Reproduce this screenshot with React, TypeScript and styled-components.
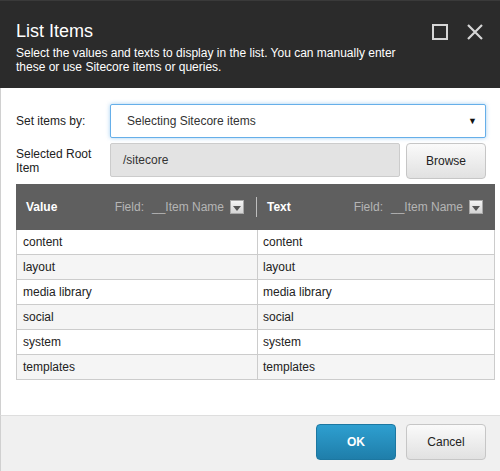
import React from "react";
import styled, { createGlobalStyle } from "styled-components";

const ITEMS = ["content", "layout", "media library", "social", "system", "templates"];

const GlobalStyle = createGlobalStyle`
  html, body {
    margin: 0;
    padding: 0;
    background: #ffffff;
  }
  body {
    font-family: "Liberation Sans", Arial, sans-serif;
    font-size: 12px;
    color: #222222;
  }
`;

const App: React.FC = () => {
  return (
    <>
      <GlobalStyle />
      <Dialog>
        <Header>
          <HeaderText>
            <Title>List Items</Title>
            <Description>
              Select the values and texts to display in the list. You can manually enter these or use Sitecore
              items or queries.
            </Description>
          </HeaderText>
          <HeaderIcons>
            <IconButton aria-label="Maximize">
              <svg width="16" height="16" viewBox="0 0 16 16">
                <rect x="1" y="1" width="14" height="14" fill="none" stroke="#d6d6d6" strokeWidth="2" />
              </svg>
            </IconButton>
            <IconButton aria-label="Close">
              <svg width="16" height="16" viewBox="0 0 16 16">
                <path d="M1 1 L15 15 M15 1 L1 15" stroke="#d6d6d6" strokeWidth="2.2" fill="none" />
              </svg>
            </IconButton>
          </HeaderIcons>
        </Header>

        <Body>
          <FormRow>
            <Label>Set items by:</Label>
            <Select>
              <span>Selecting Sitecore items</span>
              <SelectArrow>▼</SelectArrow>
            </Select>
          </FormRow>
          <FormRow>
            <Label>Selected Root Item</Label>
            <InputGroup>
              <TextInput>/sitecore</TextInput>
              <Button>Browse</Button>
            </InputGroup>
          </FormRow>

          <Table>
            <HeaderRow>
              <HeaderCell>
                <HeaderLabel>Value</HeaderLabel>
                <FieldPicker />
              </HeaderCell>
              <HeaderCell $divided>
                <HeaderLabel>Text</HeaderLabel>
                <FieldPicker />
              </HeaderCell>
            </HeaderRow>
            {ITEMS.map((item, index) => (
              <Row key={item} $striped={index % 2 === 1}>
                <Cell>{item}</Cell>
                <Cell>{item}</Cell>
              </Row>
            ))}
          </Table>
        </Body>

        <Footer>
          <Button $primary>OK</Button>
          <Button>Cancel</Button>
        </Footer>
      </Dialog>
    </>
  );
};
export default App;

const FieldPicker: React.FC = () => (
  <Field>
    <span>Field:</span>
    <FieldName>__Item Name</FieldName>
    <DropIcon>
      <svg width="8" height="5" viewBox="0 0 8 5">
        <path d="M0 0 L8 0 L4 5 Z" fill="#555" />
      </svg>
    </DropIcon>
  </Field>
);

const Dialog = styled.div`
  width: 500px;
  height: 471px;
  display: flex;
  flex-direction: column;
  overflow: hidden;
`;

const Header = styled.div`
  display: flex;
  justify-content: space-between;
  align-items: flex-start;
  padding: 19px 17px 14px 16px;
  background: #2b2b2b;
  border-top: 1px solid #3a3a3a;
  color: #ffffff;
`;

const HeaderText = styled.div`
  display: flex;
  flex-direction: column;
  gap: 4px;
`;

const Title = styled.div`
  font-size: 18px;
  line-height: 22px;
`;

const Description = styled.div`
  width: 400px;
  font-size: 12px;
  line-height: 14px;
`;

const HeaderIcons = styled.div`
  display: flex;
  gap: 19px;
  margin-top: 4px;
`;

const IconButton = styled.div`
  width: 16px;
  height: 16px;
  display: flex;
`;

const Body = styled.div`
  flex: 1;
  display: flex;
  flex-direction: column;
  gap: 5px;
  padding: 16px 5px 0 15px;
  border-left: 1px solid #d0d0d0;
`;

const FormRow = styled.div`
  display: grid;
  grid-template-columns: 94px 1fr;
  align-items: center;
  margin-right: 9px;
`;

const Label = styled.div`
  line-height: 14px;
  padding-right: 8px;
`;

const Select = styled.div`
  height: 34px;
  box-sizing: border-box;
  display: flex;
  align-items: center;
  justify-content: space-between;
  padding: 0 8px 0 16px;
  border: 1px solid #66afe9;
  border-radius: 2px;
  box-shadow: 0 0 4px rgba(102, 175, 233, 0.6);
  background: #ffffff;
  color: #333333;
`;

const SelectArrow = styled.span`
  font-size: 9px;
  color: #111111;
`;

const InputGroup = styled.div`
  display: flex;
  gap: 6px;
`;

const TextInput = styled.div`
  flex: 1;
  height: 34px;
  box-sizing: border-box;
  display: flex;
  align-items: center;
  padding: 0 12px;
  background: #e3e3e3;
  border: 1px solid #cccccc;
  border-radius: 2px;
  color: #333333;
`;

const Button = styled.div<{ $primary?: boolean }>`
  width: 80px;
  height: 36px;
  box-sizing: border-box;
  display: flex;
  align-items: center;
  justify-content: center;
  border-radius: 4px;
  border: 1px solid ${(p) => (p.$primary ? "#1c77a1" : "#c6c6c6")};
  background: ${(p) =>
    p.$primary ? "linear-gradient(#2e9fd0, #1f7eaa)" : "linear-gradient(#fafafa, #e1e1e1)"};
  color: ${(p) => (p.$primary ? "#ffffff" : "#222222")};
  font-weight: ${(p) => (p.$primary ? "bold" : "normal")};
  font-size: 12px;
`;

const Table = styled.div`
  display: flex;
  flex-direction: column;
`;

const HeaderRow = styled.div`
  display: grid;
  grid-template-columns: 240px 1fr;
  height: 46px;
  background: #5f5f5f;
`;

const HeaderCell = styled.div<{ $divided?: boolean }>`
  display: flex;
  align-items: center;
  justify-content: space-between;
  padding: 0 12px 0 ${(p) => (p.$divided ? "0" : "10px")};

  ${(p) =>
    p.$divided &&
    `
    &::before {
      content: "";
      width: 1px;
      height: 20px;
      margin-right: 10px;
      background: #bdbdbd;
    }
  `}
`;

const HeaderLabel = styled.span`
  flex: 1;
  color: #ffffff;
  font-weight: bold;
`;

const Field = styled.div`
  display: flex;
  align-items: center;
  color: #b5b5b5;
`;

const FieldName = styled.span`
  margin-left: 8px;
`;

const DropIcon = styled.span`
  width: 14px;
  height: 14px;
  box-sizing: border-box;
  margin-left: 6px;
  display: flex;
  align-items: center;
  justify-content: center;
  padding-top: 2px;
  background: linear-gradient(#f4f4f4, #d4d4d4);
  border: 1px solid #a8a8a8;
`;

const Row = styled.div<{ $striped: boolean }>`
  display: grid;
  grid-template-columns: 240px 1fr;
  height: 25px;
  box-sizing: border-box;
  background: ${(p) => (p.$striped ? "#f5f5f5" : "#ffffff")};
  border: 1px solid #cccccc;
  border-top: none;
`;

const Cell = styled.div`
  display: flex;
  align-items: center;
  padding-left: 6px;

  & + & {
    border-left: 1px solid #cccccc;
    padding-left: 5px;
  }
`;

const Footer = styled.div`
  height: 56px;
  box-sizing: border-box;
  display: flex;
  justify-content: flex-end;
  align-items: flex-start;
  gap: 10px;
  padding: 8px 14px 0 0;
  background: #f0f0f0;
  border-top: 1px solid #dedede;
  border-left: 1px solid #d0d0d0;
`;
